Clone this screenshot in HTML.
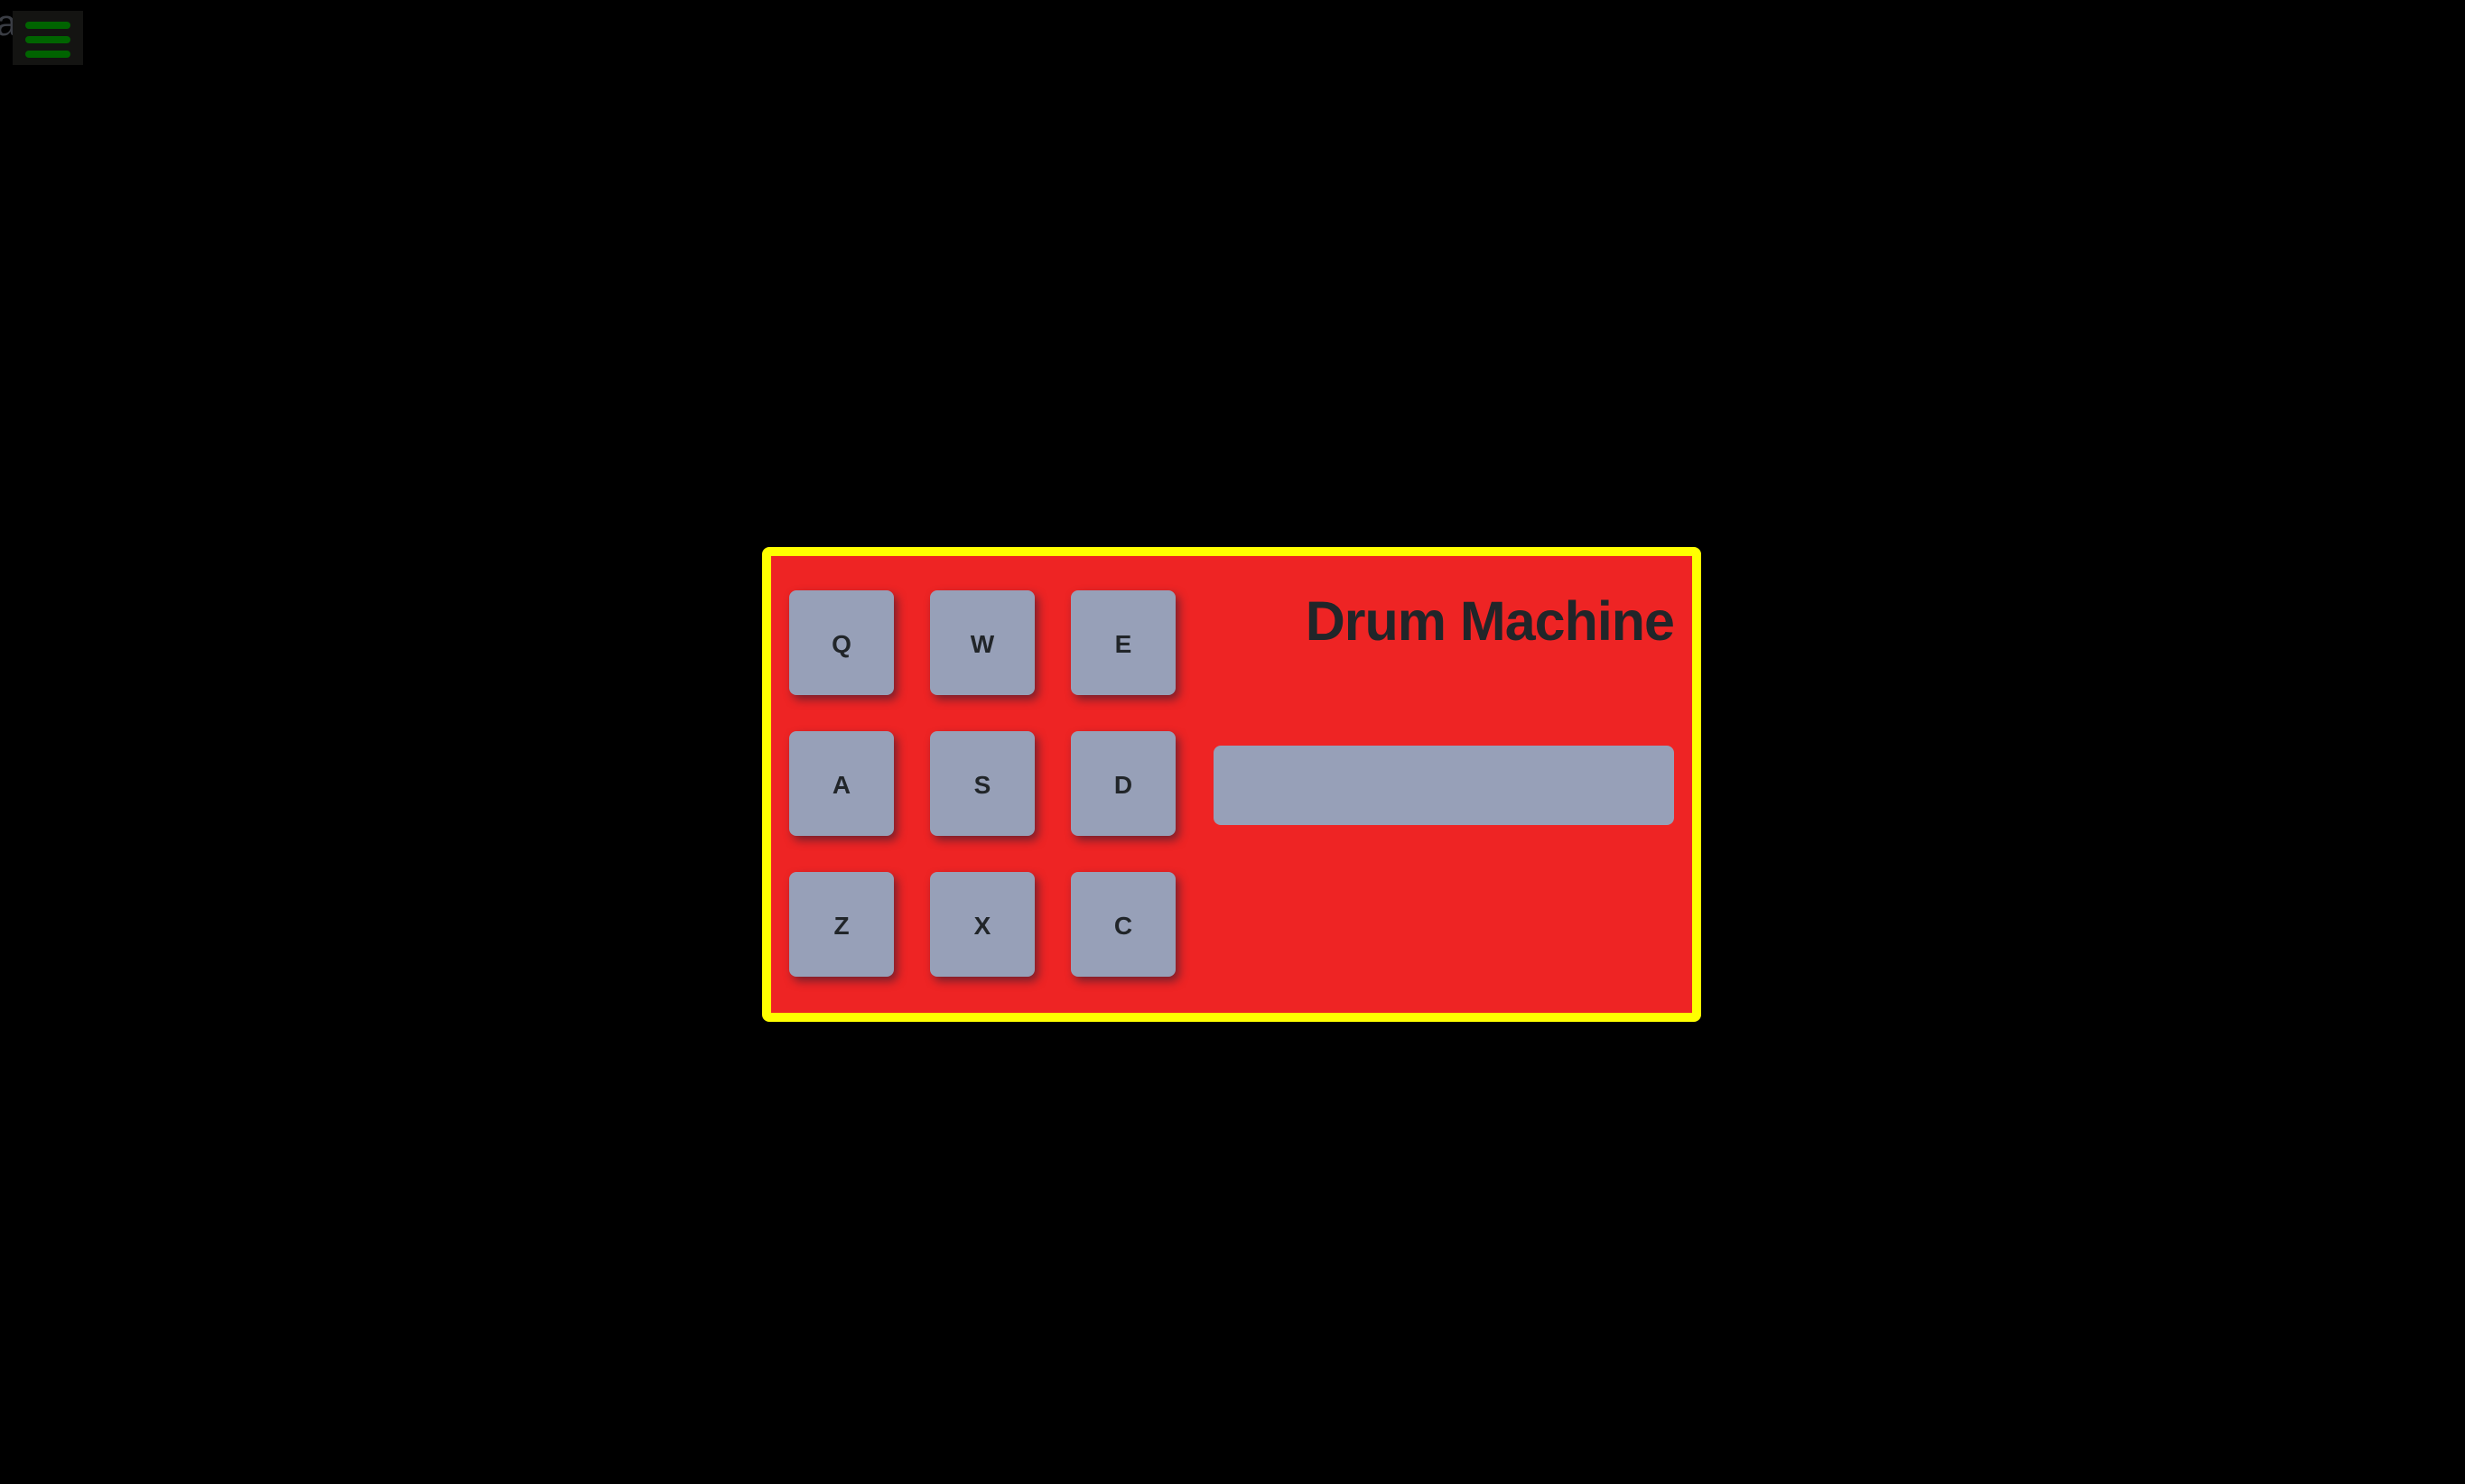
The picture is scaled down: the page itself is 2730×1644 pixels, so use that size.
<!DOCTYPE html>
<html><head><meta charset="utf-8"><style>
html,body{margin:0;padding:0;background:#000;width:2730px;height:1644px;overflow:hidden;font-family:"Liberation Sans",sans-serif}
.a{position:absolute;left:-4px;top:4px;font-size:40px;color:#3a3d44}
.ham{position:absolute;left:14px;top:12px;width:78px;height:60px;background:#141412}
.ham i{position:absolute;left:14px;width:50px;height:8px;border-radius:4px;background:#006400}
.box{position:absolute;left:844px;top:606px;width:1020px;height:506px;border:10px solid #ffff00;border-radius:8px;background:#ee2424}
.pad{position:absolute;width:116px;height:116px;background:#97a0b8;border-radius:8px;box-shadow:4px 5px 10px rgba(40,30,50,.6);display:flex;align-items:center;justify-content:center;font-weight:bold;font-size:28px;padding-top:3px;box-sizing:border-box;color:#212529}
.title{position:absolute;right:20px;top:37px;font-weight:bold;font-size:61px;color:#212529;letter-spacing:-1px;white-space:nowrap}
.disp{position:absolute;left:490px;top:210px;width:510px;height:88px;background:#97a0b8;border-radius:8px}
</style></head><body>
<div class="a">a</div>
<div class="ham"><i style="top:12px"></i><i style="top:28px"></i><i style="top:44px"></i></div>
<div class="box">
<div class="pad" style="left:20px;top:38px">Q</div>
<div class="pad" style="left:176px;top:38px">W</div>
<div class="pad" style="left:332px;top:38px">E</div>
<div class="pad" style="left:20px;top:194px">A</div>
<div class="pad" style="left:176px;top:194px">S</div>
<div class="pad" style="left:332px;top:194px">D</div>
<div class="pad" style="left:20px;top:350px">Z</div>
<div class="pad" style="left:176px;top:350px">X</div>
<div class="pad" style="left:332px;top:350px">C</div>
<div class="title">Drum Machine</div>
<div class="disp"></div>
</div>
</body></html>
